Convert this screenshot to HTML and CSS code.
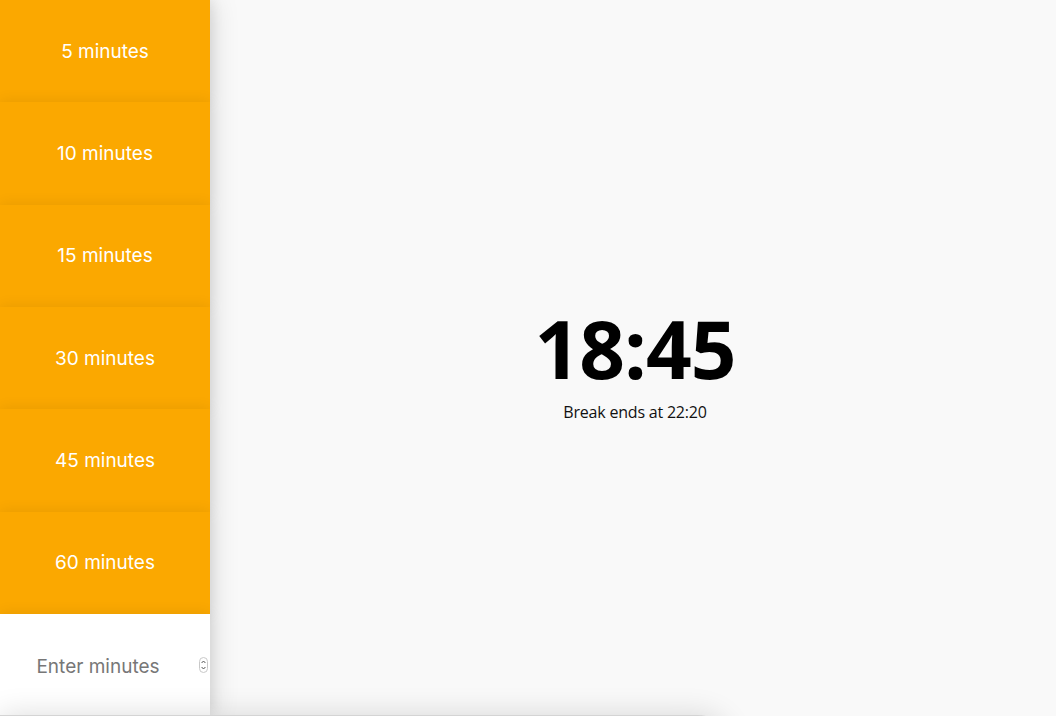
FILE: index.html
```html
<!DOCTYPE html>
<html lang="en">
<head>
<meta charset="utf-8">
<title>Break timer</title>
<link rel="stylesheet" href="styles.css">
</head>
<body>
<div class="app">
  <aside class="sidebar">
    <button class="preset">5 minutes</button>
    <button class="preset">10 minutes</button>
    <button class="preset">15 minutes</button>
    <button class="preset">30 minutes</button>
    <button class="preset">45 minutes</button>
    <button class="preset">60 minutes</button>
    <div class="custom">
      <input class="minutes" type="text" inputmode="numeric" placeholder="Enter minutes">
      <span class="spin" aria-hidden="true">
        <svg width="9" height="16" viewBox="0 0 9 16">
          <rect x="0.5" y="0.5" width="8" height="15" rx="4" fill="#fff" stroke="#c8c8c8"/>
          <path d="M2.6 6 L4.5 4 L6.4 6" fill="none" stroke="#555" stroke-width="1"/>
          <path d="M2.6 10 L4.5 12 L6.4 10" fill="none" stroke="#555" stroke-width="1"/>
        </svg>
      </span>
    </div>
  </aside>
  <main class="main">
    <div class="clock">18:45</div>
    <div class="ends">Break ends at 22:20</div>
  </main>
</div>
<div class="strip"></div>
</body>
</html>
```
FILE: styles.css
```css
html, body {
  margin: 0;
  padding: 0;
}
body {
  background: #f9f9f9;
  height: 716px;
  overflow: hidden;
  font-family: Inter, "Liberation Sans", sans-serif;
}
.app {
  display: flex;
  height: 715px;
}
.sidebar {
  width: 210px;
  flex: none;
  display: flex;
  flex-direction: column;
  box-shadow: 0 0 28px rgba(0, 0, 0, 0.16);
  position: relative;
  z-index: 1;
}
.preset {
  flex: 0 0 102.33px;
  border: 0;
  margin: 0;
  padding: 0;
  background: #fba800;
  color: #fff;
  font-family: Inter, "Liberation Sans", sans-serif;
  font-size: 19px;
  box-shadow: 0 0 14px rgba(0, 0, 0, 0.09);
  cursor: pointer;
}
.custom {
  flex: 1;
  background: #fff;
  display: flex;
  align-items: center;
  box-shadow: 0 0 14px rgba(0, 0, 0, 0.09);
  padding-right: 2px;
}
.minutes {
  flex: 1;
  min-width: 0;
  align-self: stretch;
  border: 0;
  outline: none;
  background: transparent;
  text-align: center;
  font-family: Inter, "Liberation Sans", sans-serif;
  font-size: 19px;
  color: #333;
  padding: 4px 3px 0 0;
}
.minutes::placeholder {
  color: #777;
}
.spin {
  display: flex;
  width: 9px;
  height: 16px;
  margin-top: 2px;
}
.main {
  flex: 1;
  display: flex;
  flex-direction: column;
  align-items: center;
  justify-content: center;
  padding-top: 11px;
}
.clock {
  font-family: "Open Sans", sans-serif;
  font-weight: 700;
  font-size: 80px;
  letter-spacing: -1px;
  line-height: 88px;
  color: #000;
  padding-left: 4px;
}
.ends {
  font-family: "Open Sans", sans-serif;
  font-size: 16px;
  letter-spacing: -0.2px;
  line-height: 22px;
  color: #111;
  margin-top: 9px;
  padding-left: 4px;
}
.strip {
  width: 728px;
  height: 40px;
  border-top: 1px solid #d4d4d4;
  box-shadow: 0 0 30px rgba(0, 0, 0, 0.14);
  background: #f9f9f9;
  border-radius: 0 30px 0 0;
  position: relative;
  z-index: 2;
}
```
